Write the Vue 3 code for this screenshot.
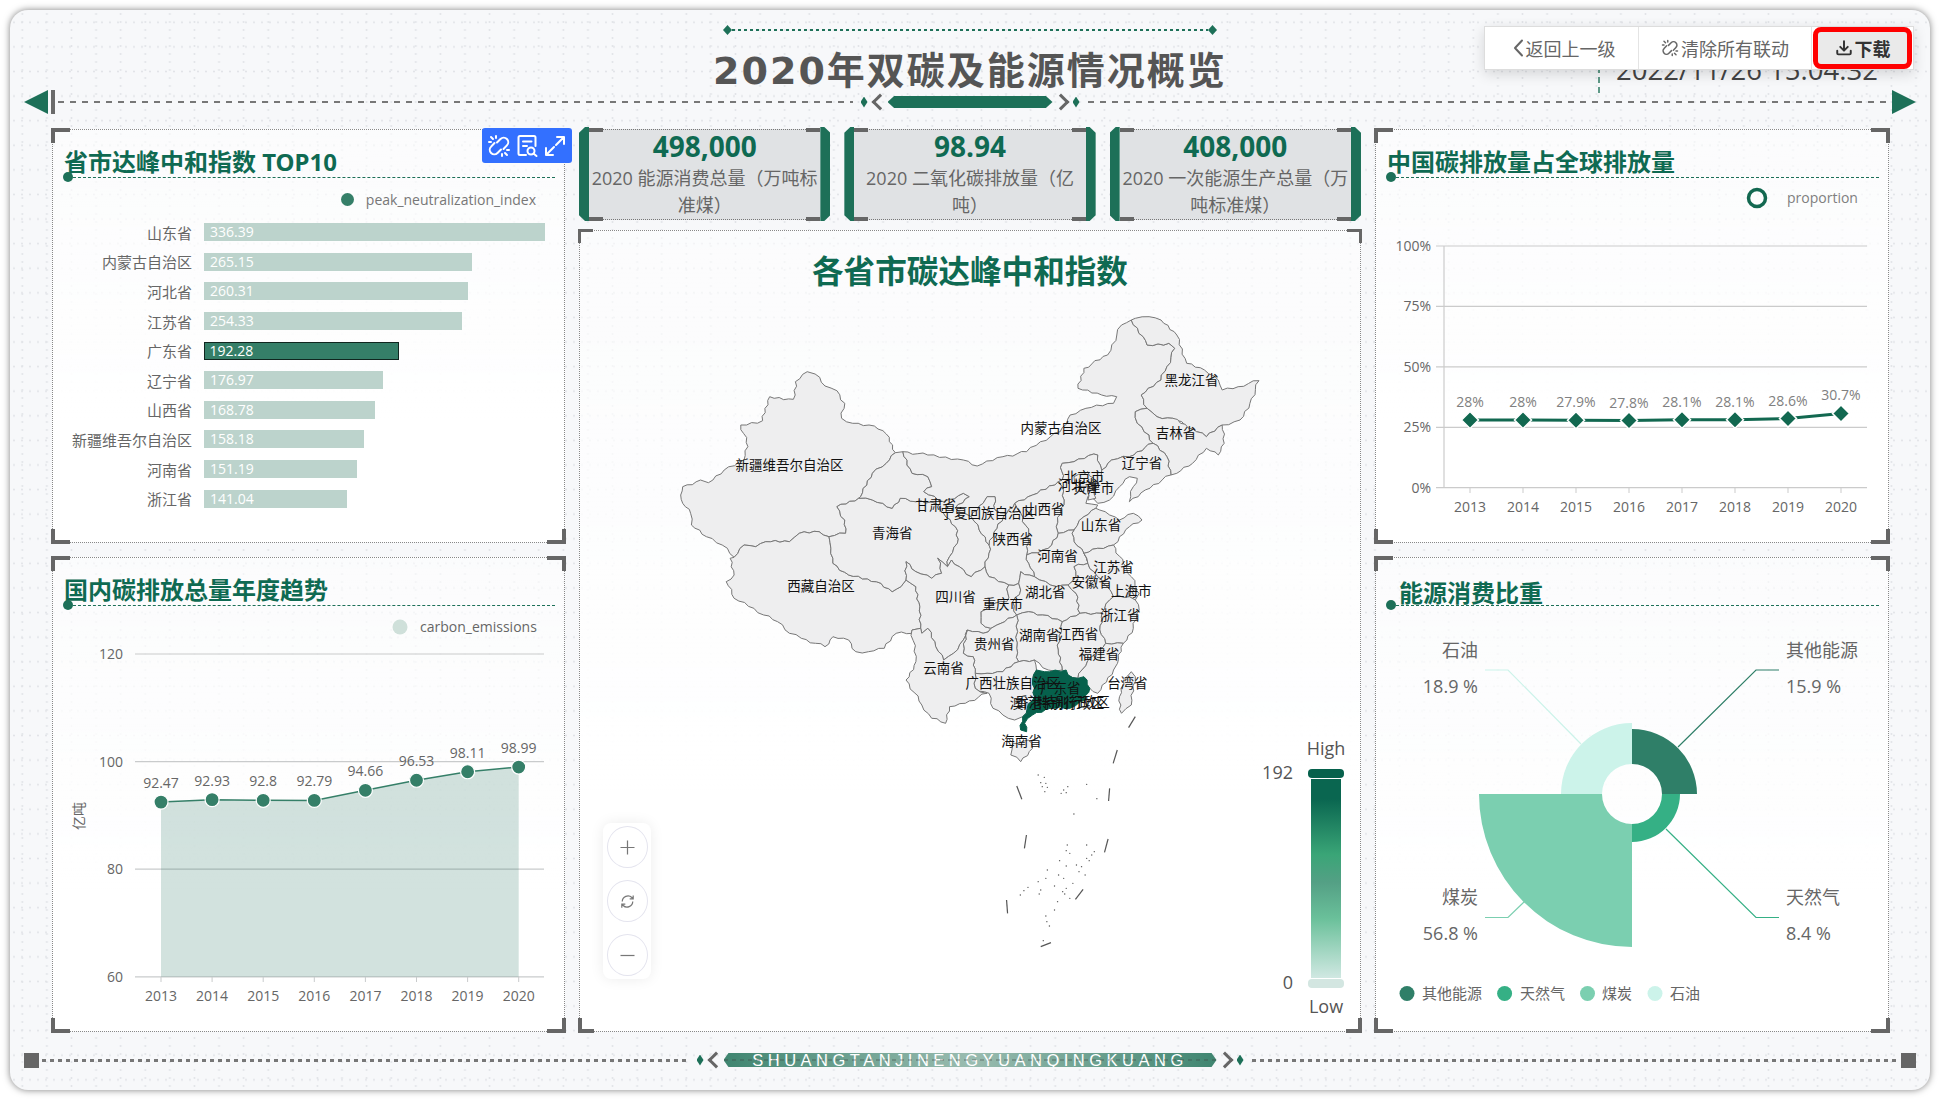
<script setup>
const bars = [
  { name: '山东省', value: 336.39 },
  { name: '内蒙古自治区', value: 265.15 },
  { name: '河北省', value: 260.31 },
  { name: '江苏省', value: 254.33 },
  { name: '广东省', value: 192.28, active: true },
  { name: '辽宁省', value: 176.97 },
  { name: '山西省', value: 168.78 },
  { name: '新疆维吾尔自治区', value: 158.18 },
  { name: '河南省', value: 151.19 },
  { name: '浙江省', value: 141.04 },
]

const stats = [
  { value: '498,000', label: '2020 能源消费总量（万吨标准煤）' },
  { value: '98.94', label: '2020 二氧化碳排放量（亿吨）' },
  { value: '408,000', label: '2020 一次能源生产总量（万吨标准煤）' },
]

const years = [2013, 2014, 2015, 2016, 2017, 2018, 2019, 2020]

// 国内碳排放 chart
const carbon = [92.47, 92.93, 92.8, 92.79, 94.66, 96.53, 98.11, 98.99]
const carbonTicks = [120, 100, 80, 60]
const cx = (i) => 161 + i * 51.1
const cy = (v) => 976.8 - ((v - 60) / 60) * 322.8
const carbonLine = carbon.map((v, i) => `${cx(i)},${cy(v)}`).join(' ')
const carbonArea = `161,976.8 ${carbonLine} ${cx(7)},976.8`

// 占全球 chart
const share = [28, 28, 27.9, 27.8, 28.1, 28.1, 28.6, 30.7]
const shareTicks = [100, 75, 50, 25, 0]
const sx = (i) => 1470 + i * 53
const sy = (v) => 487.7 - (v / 100) * 241.7
const shareLine = share.map((v, i) => `${sx(i)},${sy(v)}`).join(' ')
const diamond = (x, y) => `${x},${y - 8.5} ${x + 8.5},${y} ${x},${y + 8.5} ${x - 8.5},${y}`

// 能源 rose chart
const sector = (r0, r, a0, a1) => {
  const c = 1632
  const d = 794
  const p = (rad, a) => {
    const t = (a * Math.PI) / 180
    return `${(c + rad * Math.cos(t)).toFixed(1)} ${(d + rad * Math.sin(t)).toFixed(1)}`
  }
  return `M${p(r0, a0)} L${p(r, a0)} A${r} ${r} 0 0 1 ${p(r, a1)} L${p(r0, a1)} A${r0} ${r0} 0 0 0 ${p(r0, a0)} Z`
}
const rose = [
  { name: '其他能源', color: '#2f7f68', d: sector(30, 65, -90, 0), line: '1678,747 1756,670 1779,670', pct: '15.9 %', x: 1786, y: 651, anchor: 'start', lx: 1407, tx: 1422 },
  { name: '天然气', color: '#35b085', d: sector(30, 48, 0, 90), line: '1666,829 1756,917.5 1779,917.5', pct: '8.4 %', x: 1786, y: 898, anchor: 'start', lx: 1504.6, tx: 1520 },
  { name: '煤炭', color: '#7bcfb0', d: sector(30, 153, 90, 180), line: '1524,902 1508,917.5 1485,917.5', pct: '56.8 %', x: 1478, y: 898, anchor: 'end', lx: 1587.5, tx: 1602 },
  { name: '石油', color: '#ccf3ea', d: sector(30, 71, 180, 270), line: '1581,744 1508,670 1485,670', pct: '18.9 %', x: 1478, y: 651, anchor: 'end', lx: 1655, tx: 1670 },
]

// map outlines are kept in crop coordinates and scaled to the page here
const mx = (x) => 660 + x / 2.53
const my = (y) => 300 + y / 3

// wiggle every edge the same way from both sides, so shared borders still meet
const rough = (a, b) => {
  const flip = a[0] > b[0] || (a[0] === b[0] && a[1] > b[1])
  const [p, q] = flip ? [b, a] : [a, b]
  const len = Math.hypot(q[0] - p[0], q[1] - p[1])
  if (len < 14) return []
  const nx = (q[1] - p[1]) / len
  const ny = (p[0] - q[0]) / len
  const pts = []
  const steps = Math.min(6, Math.floor(len / 12))
  for (let k = 1; k < steps; k++) {
    const seed = (p[0] * 13 + p[1] * 7 + q[0] * 5 + q[1] * 3 + k * 11) * 9301 + 49297
    const off = ((seed % 233280) / 233280 - 0.5) * 9
    const t = k / steps
    pts.push([p[0] + (q[0] - p[0]) * t + nx * off, p[1] + (q[1] - p[1]) * t + ny * off])
  }
  return flip ? pts.reverse() : pts
}
const toPage = (s) => {
  const pts = s.split(' ').map((p) => p.split(',').map(Number))
  const out = []
  pts.forEach((p, i) => {
    out.push(p, ...rough(p, pts[(i + 1) % pts.length]))
  })
  return out.map(([x, y]) => `${mx(x).toFixed(1)},${my(y).toFixed(1)}`).join(' ')
}

const provinces = [
  '55,585 60,560 105,540 125,548 165,510 215,480 225,440 207,375 262,362 280,290 340,298 345,245 375,215 395,222 420,258 450,272 470,310 462,355 490,370 545,378 575,402 598,458 575,490 540,520 510,590 505,595 450,620 470,660 472,700 430,710 405,695 355,700 330,725 270,725 245,740 215,735 190,772 160,735 120,710 82,675 80,640 60,610',
  '180,775 190,772 215,735 245,740 270,725 330,725 355,700 405,695 430,710 435,745 440,790 480,825 550,845 590,875 612,860 625,840 650,860 660,920 662,985 640,990 640,1000 600,1000 570,1045 530,1055 498,1055 480,1020 440,1010 420,1040 360,1015 330,1000 300,965 265,945 240,925 190,895 170,845 190,825',
  '505,595 540,600 590,625 610,595 650,605 700,610 720,640 750,680 755,730 735,770 730,800 705,775 715,820 690,835 650,815 625,785 625,840 612,860 590,875 550,845 480,825 440,790 435,745 430,710 472,700 470,660 450,620',
  '598,458 617,455 640,520 680,530 690,560 670,575 720,605 770,580 785,590 750,625 790,650 810,690 835,735 835,760 825,800 790,830 760,800 740,780 730,800 735,770 755,730 750,680 720,640 700,610 650,605 610,595 590,625 540,600 505,595 510,590 540,520 575,490',
  '617,455 680,465 770,480 805,498 870,470 930,455 965,425 1015,395 1040,345 1080,325 1150,310 1158,290 1120,285 1060,265 1075,205 1135,165 1170,75 1195,60 1225,110 1235,135 1290,130 1305,145 1285,200 1270,240 1220,285 1235,325 1205,335 1210,370 1240,405 1250,430 1190,470 1145,480 1120,510 1110,465 1100,462 1050,485 1020,490 1020,540 1010,545 945,585 900,610 880,640 850,630 850,590 830,590 820,610 790,650 750,625 785,590 770,580 720,605 670,575 690,560 680,530 640,520',
  '1195,60 1205,55 1240,50 1270,60 1310,105 1335,190 1380,210 1415,240 1425,270 1465,260 1518,242 1495,310 1470,360 1425,375 1385,410 1360,395 1330,375 1300,355 1260,350 1235,325 1220,285 1270,240 1285,200 1305,145 1290,130 1235,135 1225,110',
  '1235,325 1260,350 1300,355 1360,395 1385,410 1425,375 1430,430 1415,465 1385,445 1350,490 1310,520 1295,525 1285,470 1250,430 1240,405 1210,370 1205,335',
  '1250,430 1285,470 1295,525 1230,570 1190,605 1200,560 1210,535 1190,530 1165,560 1140,600 1110,610 1085,590 1120,540 1120,510 1145,480 1190,470',
  '1020,490 1050,485 1100,462 1110,465 1120,510 1120,540 1085,590 1080,610 1110,615 1105,625 1075,650 1050,690 1010,700 1005,680 1025,600 1020,560 1010,545 1020,540',
  '1050,530 1085,515 1100,535 1085,560 1060,560',
  '1085,560 1100,570 1105,595 1085,600',
  '945,585 1010,545 1020,560 1025,600 1005,680 1010,700 985,745 930,765 935,700 915,640 900,610',
  '1050,690 1075,650 1105,625 1115,630 1140,645 1165,660 1200,640 1222,660 1190,680 1165,710 1150,735 1110,745 1075,760 1050,725 1045,700',
  '985,745 1010,700 1050,690 1045,700 1050,725 1075,760 1085,790 1050,800 1055,830 1035,855 990,855 950,830 935,790 930,765',
  '900,610 915,640 935,700 930,765 935,790 950,830 915,815 910,850 885,855 835,830 825,800 835,760 835,735 855,685 880,640',
  '830,590 850,590 850,630 880,640 855,685 835,735 810,690 790,650 820,610',
  '625,785 650,815 690,835 715,820 705,775 730,800 740,780 760,800 790,830 825,800 835,830 885,855 880,905 850,910 815,935 815,970 840,985 820,1000 780,990 770,1020 745,1060 720,1080 700,1040 680,985 665,1000 662,985 660,920 650,860 625,840',
  '885,855 910,850 915,870 895,905 905,945 875,965 855,975 840,985 815,970 815,935 850,910 880,905',
  '915,815 950,830 990,855 1035,855 1055,880 1065,940 1020,965 970,945 935,935 905,945 895,905 915,870 910,850',
  '1075,760 1085,790 1110,830 1135,860 1150,890 1140,900 1120,940 1065,940 1055,880 1035,855 1055,830 1050,800 1085,790',
  '1075,760 1110,745 1150,735 1175,790 1195,830 1210,870 1195,860 1190,890 1150,890 1135,860 1110,830 1085,790',
  '1195,860 1215,880 1205,900 1190,890',
  '1150,890 1190,890 1205,900 1215,930 1200,985 1175,1030 1130,1030 1115,990 1120,940 1140,900',
  '1020,965 1065,940 1120,940 1115,990 1130,1030 1095,1070 1070,1110 1060,1135 1035,1125 1020,1110 1010,1050',
  '1130,1030 1175,1030 1160,1090 1150,1110 1110,1180 1090,1165 1060,1135 1070,1110 1095,1070',
  '905,945 935,935 970,945 1020,965 1010,1050 1020,1110 985,1110 950,1080 910,1085 905,1045',
  '855,975 875,965 905,945 905,1045 910,1085 870,1115 830,1120 800,1120 795,1070 770,1060 780,990 820,1000 840,985',
  '800,1120 830,1120 870,1115 910,1085 950,1080 955,1110 945,1140 950,1190 920,1250 900,1260 870,1245 845,1225 835,1180 800,1165',
  '662,985 665,1000 680,985 700,1040 720,1080 745,1060 770,1020 780,990 770,1060 795,1070 800,1120 800,1165 830,1180 775,1210 735,1220 725,1270 690,1255 665,1215 625,1140 650,1085 640,990',
  '895,1330 935,1320 945,1345 915,1385 890,1365',
  '1195,1115 1205,1130 1195,1215 1170,1240 1165,1190 1175,1140',
].map(toPage)
const guangdong = toPage('975,1115 1030,1110 1035,1125 1060,1135 1075,1130 1090,1165 1080,1200 1040,1225 990,1225 945,1245 925,1270 930,1295 915,1290 920,1250 950,1190 945,1140 955,1110')

// 南海诸岛 dashes and islets, read off the lower crop
const lx = (x) => 580 + x / 1.96
const ly = (y) => 740 + y / 3
const dashes = [
  { x1: mx(1205), y1: my(1250), x2: mx(1188), y2: my(1283) },
  ...[
    [1055, 30, 1047, 70], [1040, 145, 1038, 183], [1037, 297, 1030, 337], [988, 448, 973, 478],
    [838, 480, 840, 520], [877, 285, 873, 325], [858, 138, 868, 178], [925, 608, 905, 620],
  ].map(([a, b, c, d]) => ({ x1: lx(a), y1: ly(b), x2: lx(c), y2: ly(d) })),
]
const islets = [
  [900, 105], [912, 112], [905, 128], [915, 130], [908, 140], [918, 142], [913, 155], [958, 140], [950, 150], [945, 160], [955, 158], [995, 133], [970, 222], [1015, 176],
  [957, 315], [995, 315], [955, 332], [962, 340], [1010, 335], [1005, 345], [995, 355], [942, 362], [955, 378], [975, 375], [985, 380], [1000, 362], [918, 390], [980, 395], [992, 405],
  [940, 405], [950, 415], [915, 415], [900, 425], [968, 430], [932, 438], [880, 442], [872, 452], [865, 465], [905, 450], [902, 462], [955, 445], [948, 455], [952, 462], [962, 475], [938, 485], [932, 510],
  [915, 528], [917, 545], [922, 558], [910, 602],
].map(([x, y]) => ({ x: lx(x), y: ly(y) }))

const mapLabels = [
  ['新疆维吾尔自治区', 330, 495], ['西藏自治区', 410, 858], ['青海省', 590, 698], ['甘肃省', 700, 615],
  ['宁夏回族自治区', 832, 640], ['内蒙古自治区', 1017, 385], ['山西省', 975, 628], ['河北省', 1060, 555],
  ['北京市', 1075, 530], ['天津市', 1100, 565], ['陕西省', 895, 717], ['山东省', 1118, 675],
  ['河南省', 1008, 768], ['江苏省', 1150, 800], ['安徽省', 1095, 847], ['上海市', 1195, 873],
  ['四川省', 750, 890], ['重庆市', 870, 912], ['湖北省', 977, 877], ['浙江省', 1167, 945],
  ['湖南省', 962, 1005], ['江西省', 1060, 1002], ['贵州省', 848, 1033], ['福建省', 1113, 1063],
  ['云南省', 720, 1105], ['广西壮族自治区', 895, 1148], ['广东省', 1015, 1165], ['台湾省', 1185, 1150],
  ['香港特别行政区', 1021, 1205], ['澳门特别行政区', 1007, 1210], ['海南省', 917, 1322], ['黑龙江省', 1347, 240],
  ['吉林省', 1308, 400], ['辽宁省', 1222, 490],
].map(([name, x, y]) => ({ name, x: mx(x), y: my(y) }))
</script>

<template>
  <div class="page">
    <div class="frame">
      <header class="header">
        <div class="header-top">
          <div></div>
          <div class="header-center">
            <div class="mini-line"><i class="gem"></i><span></span><i class="gem"></i></div>
            <h1 class="main-title">2020年双碳及能源情况概览</h1>
          </div>
          <div class="time-wrap">
            <div class="time">2022/11/26 15:04:32</div>
          </div>
        </div>
        <div class="deco">
          <div class="deco-side">
            <i class="tri tri-left"></i><i class="tri-bar"></i>
            <span class="dash"></span>
          </div>
          <div class="deco-mid">
            <i class="dia"></i><i class="chev chev-l"></i>
            <span class="pill"></span>
            <i class="chev chev-r"></i><i class="dia"></i>
          </div>
          <div class="deco-side">
            <span class="dash"></span>
            <i class="tri tri-right"></i>
          </div>
        </div>
        <div class="toolbar">
          <button class="tool">
            <svg class="tool-icon back" viewBox="0 0 10 18"><path d="M8.500 1.500 1.500 9l7 7.500" /></svg>
            返回上一级
          </button>
          <button class="tool">
            <svg class="tool-icon" viewBox="0 0 24 24">
              <path d="M10 8.500 13.500 5a4.500 4.500 0 0 1 6.400 6.400L16.500 15M14 15.500 10.500 19a4.500 4.500 0 0 1-6.400-6.400L7.500 9" />
              <path d="M4 3l2 2M9 2v2M2 8h2M20 21l-2-2M15 22v-2M22 16h-2" />
            </svg>
            清除所有联动
          </button>
          <div class="tool-red">
            <button class="tool-down">
              <svg class="tool-icon" viewBox="0 0 24 24"><path d="M12 3v12M7 10.500l5 5 5-5M3 15.500V19a1.500 1.500 0 0 0 1.500 1.500h15A1.500 1.500 0 0 0 21 19v-3.500" /></svg>
              下载
            </button>
          </div>
        </div>
      </header>

      <main class="board">
        <div class="col">
          <section class="panel panel-a">
            <i class="cor tl"></i><i class="cor tr"></i><i class="cor bl"></i><i class="cor br"></i>
            <div class="actions">
              <svg viewBox="0 0 24 24">
                <path d="M10 8.500 13.500 5a4.500 4.500 0 0 1 6.400 6.400L16.500 15M14 15.500 10.500 19a4.500 4.500 0 0 1-6.400-6.400L7.500 9" />
                <path d="M4 3l2 2M9 2v2M2 8h2M20 21l-2-2M15 22v-2M22 16h-2" />
              </svg>
              <svg viewBox="0 0 24 24">
                <path d="M11 21H5a1.500 1.500 0 0 1-1.500-1.500v-16A1.500 1.500 0 0 1 5 2h14a1.500 1.500 0 0 1 1.500 1.500V12M8 7.500h8.500M8 12h4" />
                <circle cx="16" cy="17" r="3.500" /><path d="M18.500 19.500 21.500 22" />
              </svg>
              <svg viewBox="0 0 24 24"><path d="M14 3h7v7M21 3l-8 8M10 21H3v-7M3 21l8-8" /></svg>
            </div>
            <h2 class="panel-title">省市达峰中和指数 TOP10</h2>
            <div class="bar-legend"><i class="bar-legend-dot"></i>peak_neutralization_index</div>
            <ul class="bars">
              <li v-for="b in bars" :key="b.name" class="bar-row">
                <span class="bar-name">{{ b.name }}</span>
                <span class="bar" :class="{ 'bar-on': b.active }" :style="{ width: b.value * 1.0125 + 'px' }">{{ b.value.toFixed(2) }}</span>
              </li>
            </ul>
          </section>

          <section class="panel panel-b">
            <i class="cor tl"></i><i class="cor tr"></i><i class="cor bl"></i><i class="cor br"></i>
            <h2 class="panel-title">国内碳排放总量年度趋势</h2>
            <svg class="chart" width="511" height="425" viewBox="53 606 511 425">
              <circle cx="400" cy="627" r="7.500" fill="#cfe0da" />
              <text x="420" y="632" class="t14 grey">carbon_emissions</text>
              <template v-for="t in carbonTicks" :key="t">
                <line x1="135" x2="544" :y1="cy(t)" :y2="cy(t)" stroke="#c9cbcc" stroke-width="1.200" />
                <text x="123" :y="cy(t) + 5" text-anchor="end" class="t14 grey">{{ t }}</text>
              </template>
              <text transform="translate(84 816) rotate(-90)" text-anchor="middle" class="t14 grey">亿吨</text>
              <polygon :points="carbonArea" fill="#1d7058" fill-opacity="0.2" />
              <polyline :points="carbonLine" fill="none" stroke="#357f68" stroke-width="1.500" />
              <template v-for="(y, i) in years" :key="y">
                <line :x1="cx(i)" :x2="cx(i)" y1="977" y2="982" stroke="#c9cbcc" />
                <text :x="cx(i)" y="1001" text-anchor="middle" class="t14 grey">{{ y }}</text>
                <circle :cx="cx(i)" :cy="cy(carbon[i])" r="7" fill="#357f68" stroke="#fff" stroke-width="1.200" />
                <text :x="cx(i)" :y="cy(carbon[i]) - 14" text-anchor="middle" class="t14 grey">{{ carbon[i] }}</text>
              </template>
            </svg>
          </section>
        </div>

        <div class="col-mid">
          <div class="stats">
            <div v-for="s in stats" :key="s.value" class="stat">
              <i class="stat-side"></i>
              <div class="stat-body">
                <i class="nub n1"></i><i class="nub n2"></i><i class="nub n3"></i><i class="nub n4"></i>
                <div class="stat-value">{{ s.value }}</div>
                <div class="stat-label">{{ s.label }}</div>
              </div>
              <i class="stat-side"></i>
            </div>
          </div>
          <section class="panel panel-map">
            <i class="cor tl small"></i><i class="cor tr small"></i><i class="cor bl small"></i><i class="cor br small"></i>
            <h2 class="map-title">各省市碳达峰中和指数</h2>
            <svg class="chart" width="778" height="736" viewBox="581 295 778 736">
              <polygon v-for="(p, i) in provinces" :key="i" :points="p" fill="#eeeeef" stroke="#777" stroke-width="1" stroke-linejoin="round" />
              <polygon :points="guangdong" fill="#06614c" stroke="#06614c" stroke-width="1" />
              <line v-for="(d, i) in dashes" :key="'d' + i" v-bind="d" stroke="#555" stroke-width="1.200" />
              <circle v-for="(d, i) in islets" :key="'s' + i" :cx="d.x" :cy="d.y" r="0.700" fill="#555" />
              <text v-for="l in mapLabels" :key="l.name" :x="l.x" :y="l.y + 5" text-anchor="middle" class="map-label">{{ l.name }}</text>
            </svg>
            <div class="zoom-box">
              <button class="zoom-btn"><svg viewBox="0 0 24 24"><path d="M12 4v16M4 12h16" /></svg></button>
              <button class="zoom-btn"><svg viewBox="0 0 24 24"><path d="M6 12a6.500 6.500 0 0 1 11-4.500l1.500 1.500M18.500 5v4h-4M18 12a6.500 6.500 0 0 1-11 4.500L5.500 15M5.500 19v-4h4" /></svg></button>
              <button class="zoom-btn"><svg viewBox="0 0 24 24"><path d="M4 12h16" /></svg></button>
            </div>
            <div class="visual-map">
              <div class="vm-text">High</div>
              <i class="vm-handle vm-top"><b class="vm-num">192</b></i>
              <div class="vm-bar"></div>
              <i class="vm-handle vm-bottom"><b class="vm-num">0</b></i>
              <div class="vm-text">Low</div>
            </div>
          </section>
        </div>

        <div class="col">
          <section class="panel panel-a">
            <i class="cor tl"></i><i class="cor tr"></i><i class="cor bl"></i><i class="cor br"></i>
            <h2 class="panel-title">中国碳排放量占全球排放量</h2>
            <svg class="chart" width="512" height="364" viewBox="1376 178 512 364">
              <circle cx="1757" cy="198" r="8.500" fill="none" stroke="#126850" stroke-width="3.500" />
              <text x="1787" y="203" class="t14 light">proportion</text>
              <template v-for="t in shareTicks" :key="t">
                <line x1="1436" x2="1867" :y1="sy(t)" :y2="sy(t)" stroke="#cbcbcb" stroke-width="1.200" />
                <text x="1431" :y="sy(t) + 5" text-anchor="end" class="t14 grey">{{ t }}%</text>
              </template>
              <line x1="1444" x2="1444" y1="246" y2="488" stroke="#cbcbcb" stroke-width="1.200" />
              <polyline :points="shareLine" fill="none" stroke="#126850" stroke-width="3" />
              <template v-for="(y, i) in years" :key="y">
                <line :x1="sx(i)" :x2="sx(i)" y1="488" y2="493" stroke="#cbcbcb" />
                <text :x="sx(i)" y="512" text-anchor="middle" class="t14 grey">{{ y }}</text>
                <polygon :points="diamond(sx(i), sy(share[i]))" fill="#126850" stroke="#fff" stroke-width="1.500" />
                <text :x="sx(i)" :y="sy(share[i]) - 13" text-anchor="middle" class="t14 light">{{ share[i] }}%</text>
              </template>
            </svg>
          </section>

          <section class="panel panel-b">
            <i class="cor tl"></i><i class="cor tr"></i><i class="cor bl"></i><i class="cor br"></i>
            <h2 class="panel-title title-in">能源消费比重</h2>
            <svg class="chart" width="512" height="425" viewBox="1376 606 512 425">
              <template v-for="r in rose" :key="r.name">
                <path :d="r.d" :fill="r.color" />
                <polyline :points="r.line" fill="none" :stroke="r.color" stroke-width="1.200" />
                <text :x="r.x" :y="r.y + 6" :text-anchor="r.anchor" class="t18 grey">{{ r.name }}</text>
                <text :x="r.x" :y="r.y + 42" :text-anchor="r.anchor" class="t18 grey">{{ r.pct }}</text>
                <circle :cx="r.lx" cy="993.500" r="7.500" :fill="r.color" />
                <text :x="r.tx" y="998.500" class="t15 grey">{{ r.name }}</text>
              </template>
            </svg>
          </section>
        </div>
      </main>

      <footer class="foot">
        <div class="deco-side">
          <i class="sq"></i>
          <span class="dash fine"></span>
        </div>
        <div class="deco-mid">
          <i class="dia"></i><i class="chev chev-l"></i>
          <span class="foot-pill">SHUANGTANJINENGYUANQINGKUANG</span>
          <i class="chev chev-r"></i><i class="dia"></i>
        </div>
        <div class="deco-side">
          <span class="dash fine"></span>
          <i class="sq"></i>
        </div>
      </footer>
    </div>
  </div>
</template>

<style>
html, body {
  margin: 0;
  background: #fff;
}
</style>

<style scoped>
.page {
  width: 1940px;
  height: 1100px;
  padding: 10px;
  box-sizing: border-box;
  font-family: "Open Sans", "Noto Sans CJK SC", sans-serif;
  color: #666;
  overflow: hidden;
}

.frame {
  position: relative;
  width: 1920px;
  height: 1080px;
  border-radius: 18px;
  box-shadow: 0 0 7px rgba(0, 0, 0, 0.5);
  background-color: #f7f8fa;
  background-image:
    radial-gradient(circle, #e2e4e8 0.9px, transparent 1.2px),
    radial-gradient(circle, #e2e4e8 0.9px, transparent 1.2px);
  background-size: 8px 24.6px, 24.6px 8px;
}

/* header */
.header {
  position: relative;
  height: 117px;
  padding: 0 14px;
}
.header-top {
  display: grid;
  grid-template-columns: 1fr 514px 1fr;
  height: 80px;
}
.header-center {
  display: flex;
  flex-direction: column;
  align-items: center;
  padding-top: 16px;
}
.mini-line {
  display: flex;
  align-items: center;
  width: 494px;
  height: 8px;
}
.mini-line span {
  flex: 1;
  height: 2px;
  background: repeating-linear-gradient(90deg, #1d7058 0 3px, transparent 3px 6px);
}
.gem {
  width: 9px;
  height: 10px;
  background: #1d7058;
  clip-path: polygon(50% 0, 100% 50%, 50% 100%, 0 50%);
}
.main-title {
  margin: 15px 0 0;
  font: 700 38px/44px "DejaVu Sans", "Noto Sans CJK SC", sans-serif;
  letter-spacing: 2px;
  color: #555;
  white-space: nowrap;
}
.time-wrap {
  display: flex;
  justify-content: flex-end;
}
.time {
  align-self: end;
  width: 300px;
  height: 36px;
  padding-left: 16px;
  border-left: 2px dashed #5f9a88;
  font-size: 27.500px;
  line-height: 26px;
  color: #444;
  white-space: nowrap;
}
.deco {
  display: grid;
  grid-template-columns: 1fr auto 1fr;
  align-items: center;
  height: 24px;
}
.deco-side {
  display: flex;
  align-items: center;
  gap: 3px;
}
.deco-mid {
  display: flex;
  align-items: center;
  gap: 2px;
  margin: 0 4px;
}
.tri {
  width: 24px;
  height: 24px;
  background: #1d7058;
}
.tri-left { clip-path: polygon(0 50%, 100% 0, 100% 100%); }
.tri-right { clip-path: polygon(0 0, 100% 50%, 0 100%); }
.tri-bar {
  width: 4px;
  height: 24px;
  background: #6a6a6a;
}
.dash {
  flex: 1;
  height: 2px;
  background: repeating-linear-gradient(90deg, #777 0 6px, transparent 6px 12px);
}
.dash.fine {
  height: 3px;
  background: repeating-linear-gradient(90deg, #777 0 4px, transparent 4px 8px);
}
.dia {
  width: 7px;
  height: 11px;
  background: #1d7058;
  clip-path: polygon(50% 0, 100% 50%, 50% 100%, 0 50%);
  margin: 0 4px;
}
.chev {
  width: 9px;
  height: 9px;
  border-left: 3.500px solid #666;
  border-bottom: 3.500px solid #666;
}
.chev-l { transform: rotate(45deg); }
.chev-r { transform: rotate(225deg); }
.pill {
  width: 165px;
  height: 12px;
  background: #1d7058;
  clip-path: polygon(4% 0, 96% 0, 100% 50%, 96% 100%, 4% 100%, 0 50%);
}

/* toolbar */
.toolbar {
  position: absolute;
  top: 16px;
  right: 16px;
  display: flex;
  width: 430px;
  height: 44px;
  background: #fff;
  border: 1px solid #ddd;
  box-sizing: border-box;
  box-shadow: 0 4px 14px rgba(0, 0, 0, 0.14);
}
.tool {
  display: flex;
  align-items: center;
  justify-content: center;
  gap: 2px;
  width: 154px;
  padding: 0 0 0 5px;
  border: 0;
  border-right: 1px solid #e4e4e4;
  background: #fff;
  font: 18px "Noto Sans CJK SC", sans-serif;
  color: #666;
}
.tool + .tool {
  width: 173px;
  padding: 0;
}
.tool-icon {
  width: 18px;
  height: 18px;
  fill: none;
  stroke: #666;
  stroke-width: 2;
  stroke-linecap: round;
  stroke-linejoin: round;
}
.tool-icon.back {
  width: 11px;
}
.tool-red {
  flex: 1;
  padding: 0 1px;
  min-width: 0;
}
.tool-down {
  display: flex;
  align-items: center;
  justify-content: center;
  gap: 2px;
  width: 100%;
  height: 100%;
  border: 5px solid #f00;
  border-radius: 8px;
  background: #eaeaea;
  box-sizing: border-box;
  font: 700 18px "Noto Sans CJK SC", sans-serif;
  color: #333;
}
.tool-down .tool-icon {
  stroke: #333;
  stroke-width: 2.600;
}

/* grid */
.board {
  display: grid;
  grid-template-columns: 513px 782px 514px;
  gap: 14px;
  height: 905px;
  margin-left: 42px;
}
.col {
  display: flex;
  flex-direction: column;
  gap: 14px;
  padding-top: 2px;
}
.col-mid {
  display: flex;
  flex-direction: column;
  gap: 11px;
}
.panel {
  position: relative;
  box-sizing: border-box;
  border: 1px dotted #888;
  background: linear-gradient(rgba(255, 255, 255, 0.55), #fff 70%);
}
.panel-a { height: 414px; }
.panel-b { height: 475px; }
.panel-map { height: 802px; }

.cor {
  position: absolute;
  width: 15px;
  height: 11px;
  border: 0 solid #666;
}
.cor.small { width: 12px; height: 11px; border-width: 0; }
.tl { top: -2px; left: -2px; border-top-width: 4px; border-left-width: 4px; }
.tr { top: -2px; right: -2px; border-top-width: 4px; border-right-width: 4px; }
.bl { bottom: -2px; left: -2px; border-bottom-width: 4px; border-left-width: 4px; }
.br { bottom: -2px; right: -2px; border-bottom-width: 4px; border-right-width: 4px; }
.cor.small.tl { border-top-width: 3px; border-left-width: 3px; }
.cor.small.tr { border-top-width: 3px; border-right-width: 3px; }
.cor.small.bl { border-bottom-width: 4px; border-left-width: 4px; }
.cor.small.br { border-bottom-width: 4px; border-right-width: 4px; }

.panel-title {
  position: relative;
  box-sizing: border-box;
  height: 48px;
  margin: 0 9px 0 15px;
  padding: 17px 0 0;
  border-bottom: 1px dashed #1d7058;
  font: 700 24px/30px "Noto Sans", "Noto Sans CJK SC", sans-serif;
  text-indent: -4px;
  color: #0f6a52;
  white-space: nowrap;
}
.panel-title::before {
  content: "";
  position: absolute;
  left: -5px;
  bottom: -5px;
  width: 10px;
  height: 10px;
  border-radius: 50%;
  background: #1d7058;
}
.title-in {
  padding-top: 20px;
  text-indent: 8px;
}

/* 指标 actions */
.actions {
  position: absolute;
  top: -2px;
  left: 429px;
  z-index: 2;
  display: flex;
  align-items: center;
  justify-content: space-around;
  width: 90px;
  height: 35px;
  padding: 0 3px;
  box-sizing: border-box;
  border-radius: 3px;
  background: #3370ff;
}
.actions svg {
  width: 24px;
  height: 24px;
  fill: none;
  stroke: #fff;
  stroke-width: 2;
  stroke-linecap: round;
  stroke-linejoin: round;
}

/* bars */
.bar-legend {
  display: flex;
  align-items: center;
  justify-content: flex-end;
  height: 20px;
  margin: 11px 28px 0 0;
  font-size: 14px;
  color: #777;
}
.bar-legend-dot {
  width: 13px;
  height: 13px;
  margin-right: 12px;
  border-radius: 50%;
  background: #357f68;
}
.bars {
  margin: 8.500px 0 0;
  padding: 0;
  list-style: none;
}
.bar-row {
  display: flex;
  align-items: center;
  height: 29.600px;
  gap: 12px;
}
.bar-name {
  flex: 0 0 139px;
  text-align: right;
  font-size: 15px;
  color: #666;
  white-space: nowrap;
}
.bar {
  box-sizing: border-box;
  height: 18px;
  padding-left: 6px;
  background: #bcd3cc;
  font-size: 14px;
  line-height: 18px;
  color: #fff;
}
.bar-on {
  background: #357f68;
  border: 1.500px solid #10261f;
  line-height: 15px;
  padding-left: 4.500px;
}

.chart {
  display: block;
}
.t14 { font-size: 14px; }
.t15 { font-size: 15px; }
.t18 { font-size: 18px; }
.grey { fill: #666; }
.light { fill: #808080; }

/* stats */
.stats {
  display: grid;
  grid-template-columns: repeat(3, 1fr);
  gap: 14px;
  height: 92px;
}
.stat {
  display: flex;
}
.stat-side {
  flex: 0 0 10px;
  background: #1d7058;
  clip-path: polygon(60% 0, 100% 0, 100% 100%, 60% 100%, 0 94%, 0 6%);
}
.stat-side:last-child {
  clip-path: polygon(0 0, 40% 0, 100% 6%, 100% 94%, 40% 100%, 0 100%);
}
.stat-body {
  position: relative;
  flex: 1;
  min-width: 0;
  margin: 2px 0 1px;
  border-top: 1px dotted #777;
  border-bottom: 1px dotted #777;
  background: #e0e2e4;
  text-align: center;
}
.nub {
  position: absolute;
  width: 14px;
  height: 4px;
  background: #666;
}
.n1 { top: -2px; left: 0; }
.n2 { top: -2px; right: 0; }
.n3 { bottom: -2px; left: 0; }
.n4 { bottom: -2px; right: 0; }
.stat-value {
  height: 35px;
  font: 700 28px/33px "Open Sans", sans-serif;
  color: #0f6a52;
}
.stat-label {
  font: 18px/27px "Open Sans", "Noto Sans CJK SC", sans-serif;
  color: #666;
}

/* map */
.map-title {
  box-sizing: border-box;
  height: 64px;
  margin: 0;
  padding-top: 17.500px;
  text-align: center;
  font: 700 31.600px/40px "Noto Sans CJK SC", sans-serif;
  color: #0f6a52;
}
.map-label {
  font: 13.500px "Noto Sans CJK SC", sans-serif;
  fill: #111;
}
.zoom-box {
  position: absolute;
  left: 23px;
  top: 592px;
  display: flex;
  flex-direction: column;
  gap: 12px;
  width: 48px;
  padding: 3px 0;
  align-items: center;
  border-radius: 8px;
  background: #fff;
  box-shadow: 0 0 14px rgba(0, 0, 0, 0.08);
}
.zoom-btn {
  width: 41px;
  height: 42px;
  padding: 0;
  border: 1px solid #e4e4ee;
  border-radius: 50%;
  background: #fff;
}
.zoom-btn svg {
  display: block;
  width: 21px;
  height: 21px;
  margin: auto;
  fill: none;
  stroke: #777;
  stroke-width: 1.400;
}
.visual-map {
  position: absolute;
  left: 728px;
  top: 507px;
  display: flex;
  flex-direction: column;
  align-items: center;
  width: 36px;
  font-size: 18px;
  color: #555;
}
.vm-text {
  height: 21px;
  line-height: 21px;
}
.vm-handle {
  position: relative;
  width: 36px;
  height: 9px;
  margin: 10px 0 0;
  border-radius: 4px;
}
.vm-bottom {
  margin: 0 0 8px;
  background: #d3e6e1;
}
.vm-top { background: #06614c; }
.vm-num {
  position: absolute;
  right: 51px;
  top: -9px;
  font-weight: 400;
  font-style: normal;
  line-height: 24px;
}
.vm-bar {
  width: 30px;
  height: 199px;
  margin: 1px 0;
  background: linear-gradient(#0a6650, #0a6650 10%, #3aa577 38%, #54a085 52%, #6ac09a 70%, #d0e8e2);
}

/* footer */
.foot {
  display: grid;
  grid-template-columns: 1fr auto 1fr;
  align-items: center;
  height: 16px;
  margin: 20px 14px 0;
}
.sq {
  width: 15px;
  height: 15px;
  background: #666;
}
.foot-pill {
  position: relative;
  width: 493px;
  height: 14px;
  text-align: center;
  font: 16.500px/14px "Liberation Sans", sans-serif;
  letter-spacing: 4.500px;
  color: #fff;
  background: linear-gradient(90deg, #3f8570, #9abcb0 50%, #3f8570);
  clip-path: polygon(1% 0, 99% 0, 100% 50%, 99% 100%, 1% 100%, 0 50%);
  white-space: nowrap;
}
.foot-pill::after {
  content: "";
  position: absolute;
  left: 0;
  right: 0;
  top: 6px;
  height: 2px;
  background: repeating-linear-gradient(90deg, rgba(60, 60, 60, 0.28) 0 4px, transparent 4px 8px);
}
</style>
